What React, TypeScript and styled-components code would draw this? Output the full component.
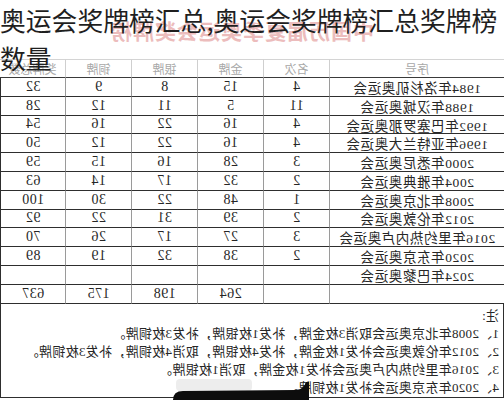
import styled, { createGlobalStyle } from "styled-components";

const GlobalStyle = createGlobalStyle`
  html, body { margin: 0; padding: 0; background: #fff; }
`;

type Row = { name: string; rank: string; gold: string; silver: string; bronze: string; total: string };

const rows: Row[] = [
  { name: "1984年洛杉矶奥运会", rank: "4", gold: "15", silver: "8", bronze: "9", total: "32" },
  { name: "1988年汉城奥运会", rank: "11", gold: "5", silver: "11", bronze: "12", total: "28" },
  { name: "1992年巴塞罗那奥运会", rank: "4", gold: "16", silver: "22", bronze: "16", total: "54" },
  { name: "1996年亚特兰大奥运会", rank: "4", gold: "16", silver: "22", bronze: "12", total: "50" },
  { name: "2000年悉尼奥运会", rank: "3", gold: "28", silver: "16", bronze: "15", total: "59" },
  { name: "2004年雅典奥运会", rank: "2", gold: "32", silver: "17", bronze: "14", total: "63" },
  { name: "2008年北京奥运会", rank: "1", gold: "48", silver: "22", bronze: "30", total: "100" },
  { name: "2012年伦敦奥运会", rank: "2", gold: "39", silver: "31", bronze: "22", total: "92" },
  { name: "2016年里约热内卢奥运会", rank: "3", gold: "27", silver: "17", bronze: "26", total: "70" },
  { name: "2020年东京奥运会", rank: "2", gold: "38", silver: "32", bronze: "19", total: "89" },
  { name: "2024年巴黎奥运会", rank: "", gold: "", silver: "", bronze: "", total: "" },
  { name: "", rank: "", gold: "264", silver: "198", bronze: "175", total: "637" },
];

const headers = ["序号", "名次", "金牌", "银牌", "铜牌", "奖牌总数"];

const notes = [
  "注:",
  "1、2008年北京奥运会取消3枚金牌，补发1枚银牌，补发3枚铜牌。",
  "2、2012年伦敦奥运会补发1枚金牌，补发4枚银牌，取消4枚铜牌，补发3枚铜牌。",
  "3、2016年里约热内卢奥运会补发1枚金牌，取消1枚银牌。",
  "4、2020年东京奥运会补发1枚铜牌。",
];

const Frame = styled.div`
  position: relative;
  width: 504px;
  height: 400px;
  overflow: hidden;
  background: #fff;
`;

// the photographed sheet is mirrored left to right
const Sheet = styled.div`
  width: 504px;
  display: flex;
  flex-direction: column;
  transform: scaleX(-1);
  font-family: "Liberation Serif", "Noto Sans CJK SC", serif;
  color: #262626;
`;

const Caption = styled.div`
  height: 59px;
  display: flex;
  align-items: center;
  justify-content: center;
  font-family: "Noto Sans CJK SC", sans-serif;
  font-size: 21px;
  font-weight: 700;
  letter-spacing: 1px;
  color: #ecbcbc;
  padding-left: 20px;
  box-sizing: border-box;
`;

const Grid = styled.div`
  display: grid;
  grid-template-columns: 174px repeat(5, 66px);
`;

const HeadCell = styled.div<{ $first?: boolean }>`
  height: 19px;
  box-sizing: border-box;
  border-top: 1px solid #d4d4d4;
  border-bottom: 1px solid #3a3a3a;
  border-left: ${(p) => (p.$first ? "none" : "1px solid #cfcfcf")};
  display: flex;
  align-items: center;
  justify-content: center;
  font-family: "Noto Sans CJK SC", sans-serif;
  font-size: 12px;
  color: #a8a8a8;
`;

const Cell = styled.div<{ $first?: boolean; $name?: boolean }>`
  height: 18.8px;
  box-sizing: border-box;
  border-bottom: 1px solid #2e2e2e;
  border-left: ${(p) => (p.$first ? "none" : "1px solid #9a9a9a")};
  display: flex;
  align-items: center;
  justify-content: center;
  font-size: ${(p) => (p.$name ? "13.5px" : "14px")};
  letter-spacing: ${(p) => (p.$name ? "0.6px" : "0.5px")};
  white-space: nowrap;
  &:nth-child(6n) {
    border-right: 1px solid #2e2e2e;
  }
`;

const Notes = styled.div`
  height: 94px;
  box-sizing: border-box;
  border: 1px solid #2e2e2e;
  border-top: none;
  padding: 3px 4px 0;
  font-size: 13px;
  line-height: 18px;
`;

const NoteLine = styled.div`
  white-space: nowrap;
  letter-spacing: 0.3px;
`;

const Title = styled.div`
  position: absolute;
  top: 1px;
  left: 0;
  width: 504px;
  font-family: "Noto Sans CJK SC", sans-serif;
  font-size: 25.8px;
  line-height: 38px;
  color: #1f1f1f;
`;

const Blob = styled.svg`
  position: absolute;
  left: 0;
  bottom: 0;
`;

export default function App() {
  return (
    <Frame>
      <GlobalStyle />
      <Sheet>
        <Caption>中国历届夏季奥运会奖牌榜</Caption>
        <Grid>
          {headers.map((h, i) => (
            <HeadCell key={h} $first={i === 0}>
              {h}
            </HeadCell>
          ))}
          {rows.map((r, i) =>
            [r.name, r.rank, r.gold, r.silver, r.bronze, r.total].map((v, j) => (
              <Cell key={`${i}-${j}`} $first={j === 0} $name={j === 0}>
                {v}
              </Cell>
            ))
          )}
        </Grid>
        <Notes>
          {notes.map((n) => (
            <NoteLine key={n}>{n}</NoteLine>
          ))}
        </Notes>
      </Sheet>
      <Title>奥运会奖牌榜汇总,奥运会奖牌榜汇总奖牌榜数量</Title>
      <Blob width="504" height="24" viewBox="0 376 504 24">
        <rect x="176" y="379" width="76" height="12" rx="4" fill="#e6e6e6" opacity="0.7" />
        <path d="M173 400 Q173 391 183 391 L296 390 Q304 389 306 382 L309 382 L309 400 Z" fill="#0d0d0d" />
      </Blob>
    </Frame>
  );
}
